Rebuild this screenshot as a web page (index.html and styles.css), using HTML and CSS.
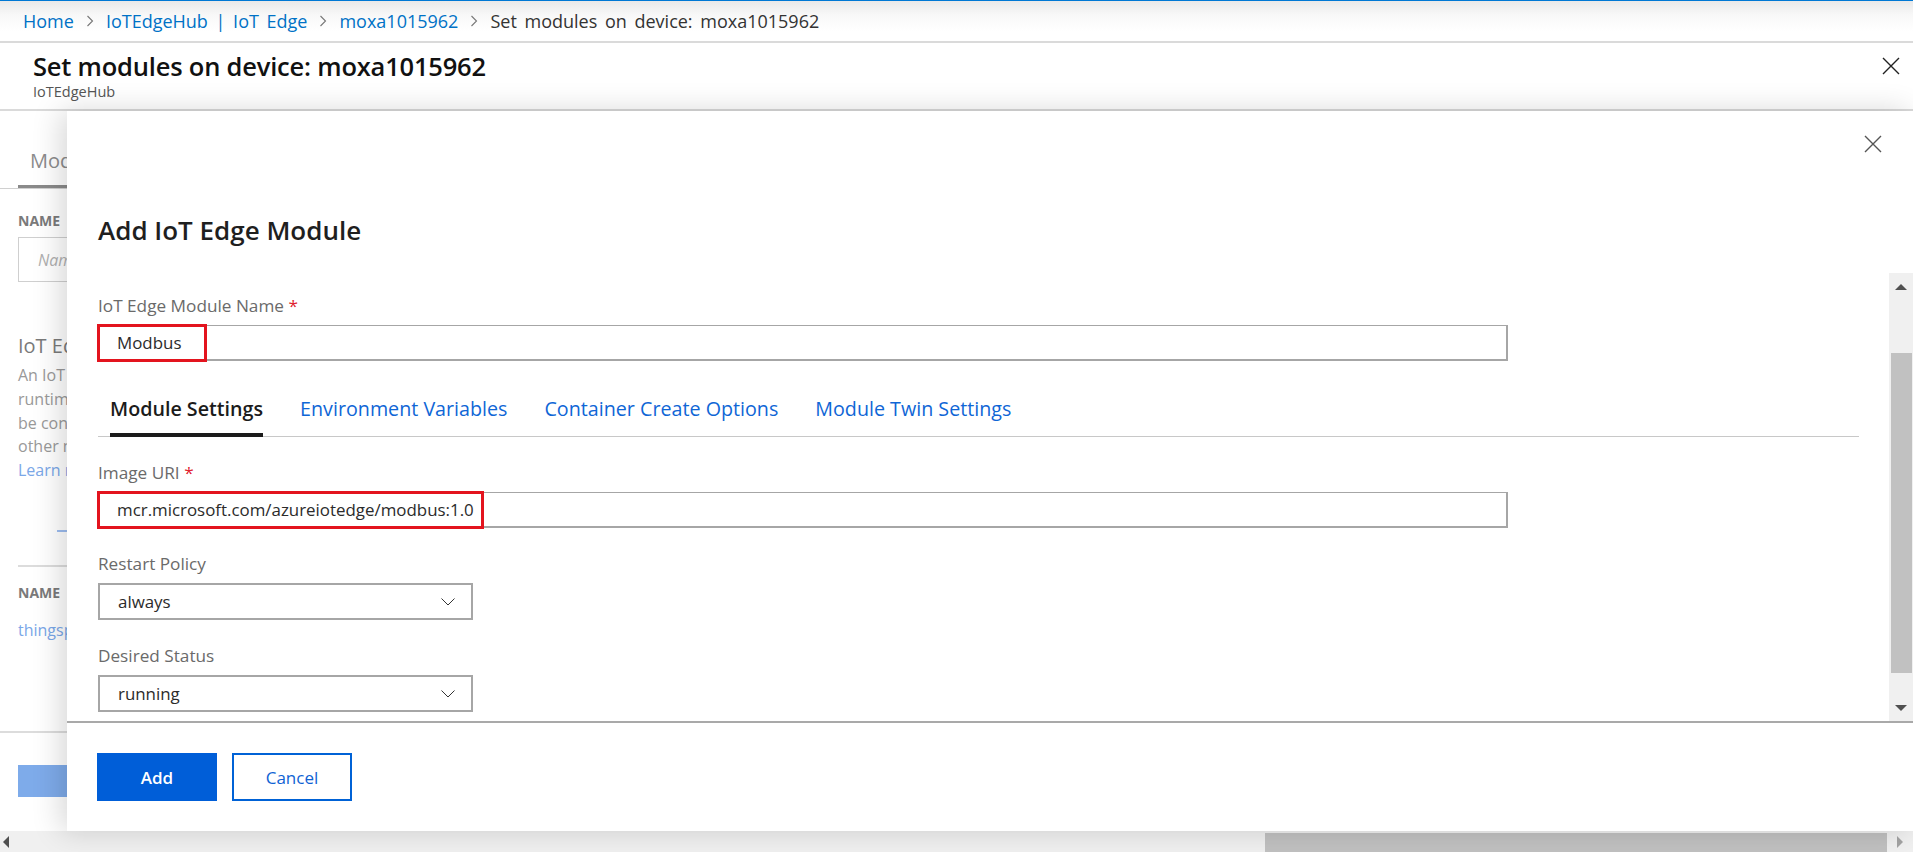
FILE: index.html
```html
<!DOCTYPE html>
<html lang="en">
<head>
<meta charset="utf-8">
<title>Set modules on device: moxa1015962</title>
<link rel="stylesheet" href="styles.css">
</head>
<body>
<div class="page">
  <nav class="crumbs">
    <a class="crumb-link" href="#">Home</a>
    <svg class="crumb-sep" viewBox="0 0 8 12" width="8" height="12"><path d="M1.5 1 L6.5 6 L1.5 11" fill="none" stroke="#777" stroke-width="1.1"/></svg>
    <a class="crumb-link" href="#">IoTEdgeHub | IoT Edge</a>
    <svg class="crumb-sep" viewBox="0 0 8 12" width="8" height="12"><path d="M1.5 1 L6.5 6 L1.5 11" fill="none" stroke="#777" stroke-width="1.1"/></svg>
    <a class="crumb-link" href="#">moxa1015962</a>
    <svg class="crumb-sep" viewBox="0 0 8 12" width="8" height="12"><path d="M1.5 1 L6.5 6 L1.5 11" fill="none" stroke="#777" stroke-width="1.1"/></svg>
    <span class="crumb-current">Set modules on device: moxa1015962</span>
  </nav>

  <header class="blade-header">
    <div class="blade-titles">
      <h1 class="blade-title">Set modules on device: moxa1015962</h1>
      <div class="blade-sub">IoTEdgeHub</div>
    </div>
    <svg class="close-icon" viewBox="0 0 18 18" width="18" height="18"><path d="M1 1 L17 17 M17 1 L1 17" stroke="#222" stroke-width="1.4" fill="none"/></svg>
  </header>

  <main class="main">
    <section class="back-blade">
      <div class="bb-tabs"><span class="bb-tab">Modules</span></div>
      <div class="bb-label bb-name1">NAME</div>
      <div class="bb-input"><span>Name</span></div>
      <div class="bb-heading">IoT Edge Modules</div>
      <p class="bb-text">An IoT Edge device<br>runtime module<br>be configured<br>other modules<br><span class="bb-link">Learn more</span></p>
      <div class="bb-add"></div>
      <div class="bb-rule"></div>
      <div class="bb-label bb-name2">NAME</div>
      <div class="bb-link bb-things">thingspro</div>
      <div class="bb-foot">
        <div class="bb-btn"></div>
      </div>
    </section>

    <section class="panel">
      <div class="panel-top">
        <div class="panel-close-row">
          <svg class="close-icon" viewBox="0 0 18 18" width="18" height="18"><path d="M1 1 L17 17 M17 1 L1 17" stroke="#555" stroke-width="1.4" fill="none"/></svg>
        </div>
        <h2 class="panel-title">Add IoT Edge Module</h2>
      </div>

      <div class="panel-body">
        <div class="panel-scroll">
          <label class="field-label first">IoT Edge Module Name <span class="req">*</span></label>
          <div class="text-input wide">
            <span class="input-value">Modbus</span>
            <span class="highlight hl-name"></span>
          </div>

          <div class="tabs">
            <span class="tab active">Module Settings</span>
            <span class="tab">Environment Variables</span>
            <span class="tab">Container Create Options</span>
            <span class="tab">Module Twin Settings</span>
          </div>

          <label class="field-label">Image URI <span class="req">*</span></label>
          <div class="text-input wide">
            <span class="input-value">mcr.microsoft.com/azureiotedge/modbus:1.0</span>
            <span class="highlight hl-uri"></span>
          </div>

          <label class="field-label">Restart Policy</label>
          <div class="select">
            <span class="input-value">always</span>
            <svg class="chev" viewBox="0 0 14 8" width="14" height="8"><path d="M0.5 0.5 L7 7 L13.5 0.5" fill="none" stroke="#333" stroke-width="1"/></svg>
          </div>

          <label class="field-label">Desired Status</label>
          <div class="select">
            <span class="input-value">running</span>
            <svg class="chev" viewBox="0 0 14 8" width="14" height="8"><path d="M0.5 0.5 L7 7 L13.5 0.5" fill="none" stroke="#333" stroke-width="1"/></svg>
          </div>
        </div>
        <div class="vscroll">
          <svg class="sb-arrow" viewBox="0 0 12 8" width="12" height="8"><path d="M0 7 L6 1 L12 7 Z" fill="#505050"/></svg>
          <div class="vtrack"><div class="vthumb"></div></div>
          <svg class="sb-arrow" viewBox="0 0 12 8" width="12" height="8"><path d="M0 1 L6 7 L12 1 Z" fill="#505050"/></svg>
        </div>
      </div>

      <footer class="panel-footer">
        <button class="btn btn-primary">Add</button>
        <button class="btn btn-secondary">Cancel</button>
      </footer>
    </section>
  </main>

  <div class="hscroll">
    <svg class="hs-arrow" viewBox="0 0 8 12" width="8" height="12"><path d="M7 0 L1 6 L7 12 Z" fill="#505050"/></svg>
    <div class="htrack"><div class="hthumb"></div></div>
    <svg class="hs-arrow" viewBox="0 0 8 12" width="8" height="12"><path d="M1 0 L7 6 L1 12 Z" fill="#a3a3a3"/></svg>
  </div>
</div>
</body>
</html>
```

FILE: styles.css
```css
* { box-sizing: border-box; }
html, body { margin: 0; padding: 0; }
body {
  width: 1913px;
  height: 852px;
  overflow: hidden;
  background: #fff;
  font-family: "Open Sans", "Noto Sans", "Liberation Sans", sans-serif;
  color: #222;
}
.page {
  display: flex;
  flex-direction: column;
  height: 852px;
}

/* breadcrumb bar */
.crumbs {
  height: 43px;
  flex: none;
  display: flex;
  align-items: center;
  padding: 0 0 1px 23px;
  border-top: 1px solid #0078d4;
  border-bottom: 2px solid #dadada;
  background: linear-gradient(#e9e9e9 0px, #f8f8f8 14px, #fff 30px);
  font-size: 18px;
  word-spacing: 3px;
  gap: 11px;
}
.crumb-link { color: #0072c6; text-decoration: none; }
.crumb-current { color: #333; }
.crumb-sep { flex: none; margin: 0 1px; }

/* blade header */
.blade-header {
  height: 68px;
  flex: none;
  display: flex;
  justify-content: space-between;
  align-items: flex-start;
  padding: 6px 13px 0 33px;
  border-bottom: 2px solid #dadada;
}
.blade-title {
  margin: 0;
  font-size: 25.5px;
  font-weight: 600;
  line-height: 34px;
  color: #111;
  letter-spacing: -0.2px;
}
.blade-sub {
  font-size: 14.5px;
  color: #555;
  line-height: 18px;
  margin-top: 0;
}
.blade-header .close-icon { margin-top: 8px; }

/* main area */
.main {
  flex: 1;
  display: flex;
  min-height: 0;
  position: relative;
}

/* dimmed blade behind the panel */
.back-blade {
  width: 67px;
  flex: none;
  overflow: hidden;
  white-space: nowrap;
  color: #8a8a8a;
  display: flex;
  flex-direction: column;
}
.bb-tabs {
  height: 78px;
  border-bottom: 1px solid #d0d0d0;
  padding-left: 18px;
  display: flex;
  align-items: flex-end;
}
.bb-tab {
  font-size: 20px;
  color: #8c8c8c;
  padding: 0 0 10px 12px;
  border-bottom: 3px solid #8a8a8a;
  line-height: 28px;
}
.bb-label {
  font-size: 14px;
  font-weight: 700;
  color: #7a7a7a;
  padding-left: 18px;
  line-height: 20px;
}
.bb-name1 { margin-top: 22px; }
.bb-input {
  margin: 6px 0 0 18px;
  height: 45px;
  border: 1px solid #cfcfcf;
  border-right: none;
  padding-left: 19px;
  display: flex;
  align-items: center;
  font-style: italic;
  color: #b0b0b0;
  font-size: 16px;
}
.bb-heading {
  font-size: 20px;
  color: #7a7a7a;
  padding-left: 18px;
  margin-top: 50px;
  line-height: 28px;
}
.bb-text {
  margin: 4px 0 0;
  padding-left: 18px;
  font-size: 16px;
  line-height: 23.8px;
  color: #999;
}
.bb-link { color: #7aa7e8; }
.bb-add {
  margin: 47px 0 0 57px;
  height: 2px;
  background: #9dbdf0;
}
.bb-rule {
  margin: 33px 0 0 18px;
  height: 2px;
  background: #dcdcdc;
}
.bb-name2 { margin-top: 16px; }
.bb-things {
  padding-left: 18px;
  font-size: 16px;
  margin-top: 16px;
  line-height: 22px;
}
.bb-foot {
  margin-top: 90px;
  border-top: 2px solid #dcdcdc;
  padding: 32px 0 0 18px;
}
.bb-btn {
  height: 32px;
  background: #7eabea;
}

/* panel */
.panel {
  flex: 1;
  display: flex;
  flex-direction: column;
  background: #fff;
  box-shadow: -6px 0 28px rgba(0, 0, 0, 0.16);
  z-index: 1;
  min-width: 0;
}
.panel-top {
  height: 162px;
  flex: none;
  padding-left: 31px;
}
.panel-close-row {
  height: 66px;
  display: flex;
  justify-content: flex-end;
  align-items: center;
  padding-right: 31px;
}
.panel-title {
  margin: 36px 0 0;
  font-size: 26px;
  font-weight: 600;
  line-height: 34px;
  color: #1f1f1f;
}
.panel-body {
  height: 450px;
  flex: none;
  display: flex;
  border-bottom: 2px solid #a9a9a9;
}
.panel-scroll {
  flex: 1;
  min-width: 0;
  overflow: hidden;
  padding: 21px 30px 0 31px;
  display: flex;
  flex-direction: column;
  align-items: flex-start;
}
.field-label {
  display: block;
  font-size: 17.2px;
  line-height: 24px;
  color: #6a6a6a;
  margin-top: 24px;
}
.field-label.first { margin-top: 0; }
.req { color: #e0202e; }

.text-input {
  position: relative;
  margin-top: 7px;
  height: 36px;
  border: 1px solid #a6a6a6;
  border-right-width: 2px;
  border-bottom-width: 2px;
  display: flex;
  align-items: center;
  padding-left: 18px;
  font-size: 16.9px;
  color: #333;
}
.text-input.wide { width: 1410px; }
.input-value { color: #2b2b2b; }
.highlight {
  position: absolute;
  top: -2px;
  left: -2px;
  bottom: -3px;
  border: 3px solid #e3141e;
  pointer-events: none;
}
.hl-name { width: 110px; }
.hl-uri { width: 387px; }

.tabs {
  align-self: stretch;
  display: flex;
  gap: 0;
  margin-top: 26px;
  border-bottom: 1px solid #c8c8c8;
  padding-left: 12px;
}
.tab {
  font-size: 19.7px;
  line-height: 28px;
  padding: 8px 0 10px;
  margin-right: 37px;
  color: #0f66d6;
  border-bottom: 4px solid transparent;
  margin-bottom: -1px;
}
.tab.active {
  color: #1b1b1b;
  font-weight: 600;
  border-bottom-color: #1b1b1b;
}

.select {
  margin-top: 7px;
  width: 375px;
  height: 37px;
  border: 2px solid #a6a6a6;
  display: flex;
  align-items: center;
  justify-content: space-between;
  padding: 0 16px 0 18px;
  font-size: 16.9px;
}
.chev { flex: none; }

/* vertical scrollbar */
.vscroll {
  width: 24px;
  flex: none;
  background: #f0f0f0;
  display: flex;
  flex-direction: column;
  align-items: center;
  padding: 10px 0 9px;
}
.sb-arrow { flex: none; }
.vtrack {
  flex: 1;
  align-self: stretch;
  padding: 62px 1px 31px 2px;
  display: flex;
}
.vthumb {
  flex: 1;
  background: #c1c1c1;
}

.panel-footer {
  flex: 1;
  display: flex;
  align-items: flex-start;
  gap: 15px;
  padding: 30px 0 0 30px;
}
.btn {
  width: 120px;
  height: 48px;
  font-family: inherit;
  font-size: 17px;
  font-weight: 600;
  cursor: pointer;
}
.btn-primary {
  background: #005ed8;
  color: #fff;
  border: none;
}
.btn-secondary {
  background: #fff;
  color: #0f62d4;
  border: 2px solid #0062d6;
  font-weight: 500;
}

/* horizontal scrollbar */
.hscroll {
  height: 21px;
  flex: none;
  background: #f0f0f0;
  display: flex;
  align-items: center;
  padding: 0 9px 0 2px;
}
.hs-arrow { flex: none; }
.htrack {
  flex: 1;
  align-self: stretch;
  display: flex;
  padding: 2px 9px 0 1255px;
}
.hthumb {
  flex: 1;
  background: #c1c1c1;
}
```
